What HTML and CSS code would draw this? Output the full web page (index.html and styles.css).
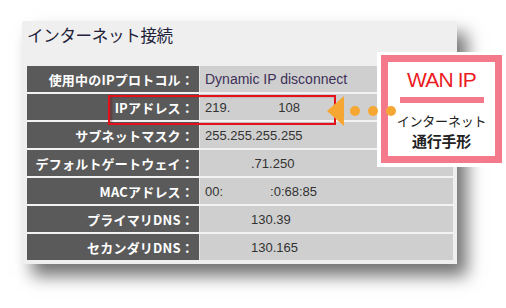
FILE: index.html
```html
<!DOCTYPE html>
<html lang="ja">
<head>
<meta charset="utf-8">
<link rel="stylesheet" href="styles.css">
</head>
<body>
<div class="stage">
  <div class="panel">
    <h1 class="title">インターネット接続</h1>
    <div class="table">
      <div class="label">使用中のIPプロトコル：</div>
      <div class="value proto">Dynamic IP disconnect</div>
      <div class="label">IPアドレス：</div>
      <div class="value">219.<span class="gap-ip">108</span></div>
      <div class="label">サブネットマスク：</div>
      <div class="value">255.255.255.255</div>
      <div class="label">デフォルトゲートウェイ：</div>
      <div class="value"><span class="gap-mid">.71.250</span></div>
      <div class="label">MACアドレス：</div>
      <div class="value">00:<span class="gap-mac">:0:68:85</span></div>
      <div class="label">プライマリDNS：</div>
      <div class="value"><span class="gap-mid">130.39</span></div>
      <div class="label">セカンダリDNS：</div>
      <div class="value"><span class="gap-mid">130.165</span></div>
    </div>
  </div>

  <div class="highlight"></div>

  <div class="callout">
    <div class="callout-inner">
      <div class="wan">WAN IP</div>
      <div class="bar"></div>
      <div class="jp">インターネット</div>
      <div class="jp bold">通行手形</div>
    </div>
  </div>

  <div class="pointer">
    <div class="tri"></div>
    <div class="dot"></div>
    <div class="dot"></div>
    <div class="dot"></div>
  </div>
</div>
</body>
</html>
```
FILE: styles.css
```css
html, body {
  margin: 0;
  padding: 0;
  background: #ffffff;
}
body {
  width: 506px;
  height: 308px;
  overflow: hidden;
  font-family: "Liberation Sans", Arial, sans-serif;
}
.stage {
  position: relative;
  width: 506px;
  height: 308px;
  padding-top: 21px;
  padding-left: 22px;
  box-sizing: border-box;
}
.panel {
  width: 435px;
  height: 243px;
  box-sizing: border-box;
  background: #efefef;
  padding: 0 4px 2px 5px;
  display: flex;
  flex-direction: column;
  box-shadow: 10px 12px 16px rgba(0, 0, 0, 0.55);
}
.title {
  margin: 0;
  height: 45px;
  padding-top: 3px;
  box-sizing: border-box;
  font-family: "Noto Sans CJK JP", sans-serif;
  font-weight: 400;
  font-size: 16.5px;
  line-height: 22px;
  color: #22223a;
  letter-spacing: -0.3px;
}
.table {
  display: grid;
  grid-template-columns: 172px 1fr;
  grid-auto-rows: 26px;
  row-gap: 2px;
  background: #f2f2f2;
}
.label {
  background: #5a5a5a;
  color: #ffffff;
  font-family: "Noto Sans CJK JP", sans-serif;
  font-weight: 700;
  font-size: 13px;
  padding-right: 5px;
  display: flex;
  align-items: center;
  justify-content: flex-end;
  letter-spacing: 0.2px;
}
.value {
  background: #cfcfcf;
  color: #333333;
  font-size: 13px;
  padding-left: 5px;
  display: flex;
  align-items: center;
  white-space: pre;
  border-left: 1px solid #e4e4e4;
}
.value.proto {
  color: #3e2f58;
  font-size: 14px;
}
.gap-ip { margin-left: 48px; }
.gap-mid { margin-left: 46px; }
.gap-mac { margin-left: 47px; }

.highlight {
  position: absolute;
  left: 108px;
  top: 95px;
  width: 228px;
  height: 30px;
  box-sizing: border-box;
  border: 2px solid #e4101c;
  box-shadow: inset 2px 0 2px rgba(120, 0, 0, 0.35);
}

.pointer {
  position: absolute;
  left: 327px;
  top: 96px;
  height: 30px;
  display: flex;
  align-items: center;
  gap: 8px;
}
.tri {
  width: 0;
  height: 0;
  border-top: 15px solid transparent;
  border-bottom: 15px solid transparent;
  border-right: 17px solid #f6a733;
  margin-right: -2px;
}
.dot {
  width: 10px;
  height: 10px;
  border-radius: 50%;
  background: #f6a733;
}

.callout {
  position: absolute;
  left: 377px;
  top: 52px;
  width: 127px;
  height: 115px;
  box-sizing: border-box;
  background: #ffffff;
  padding: 3px 2px 4px 4px;
}
.callout-inner {
  height: 100%;
  box-sizing: border-box;
  border: 7px solid #f47a8b;
  background: #ffffff;
  display: flex;
  flex-direction: column;
  align-items: center;
}
.wan {
  margin-top: 6px;
  font-size: 21px;
  line-height: 24px;
  color: #ec1b24;
  letter-spacing: -0.8px;
}
.bar {
  margin-top: 5px;
  width: 84px;
  height: 6px;
  background: #f47a8b;
}
.jp {
  font-family: "Noto Sans CJK JP", sans-serif;
  font-size: 13px;
  line-height: 18px;
  color: #222222;
  letter-spacing: -0.2px;
}
.bar + .jp { margin-top: 9px; }
.jp.bold {
  font-weight: 700;
  font-size: 15px;
  line-height: 20px;
  margin-top: 1px;
}
```
